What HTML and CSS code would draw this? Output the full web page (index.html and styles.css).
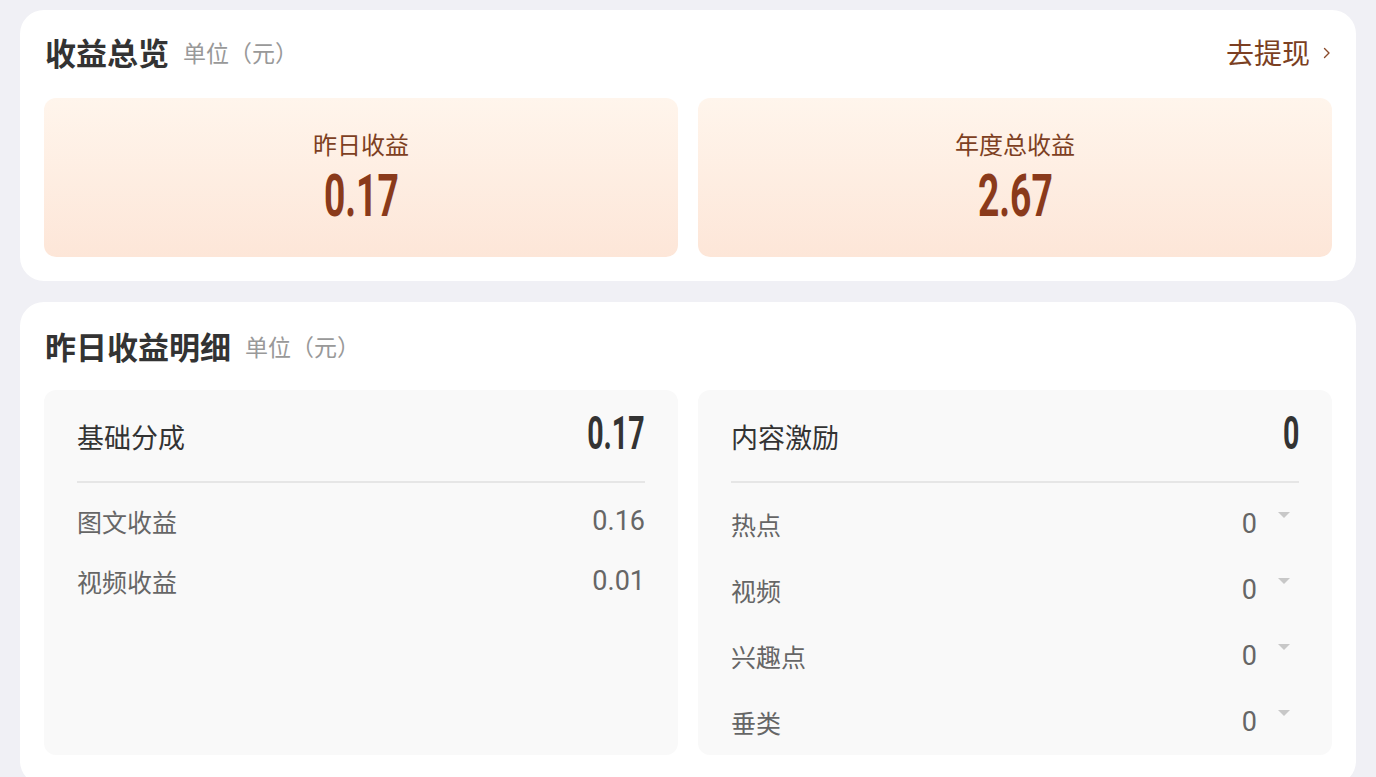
FILE: index.html
```html
<!DOCTYPE html>
<html lang="zh">
<head>
<meta charset="utf-8">
<title>收益</title>
<link rel="stylesheet" href="styles.css">
</head>
<body>
<div class="page">
  <section class="card overview">
    <div class="card-head">
      <div class="title-wrap"><h2 class="title">收益总览</h2><span class="unit">单位（元）</span></div>
      <a class="withdraw">去提现<svg class="chev" width="10" height="14" viewBox="0 0 10 14"><path d="M2.5 2.5 L7 7 L2.5 11.5" fill="none" stroke="#8a4a2a" stroke-width="1.4" stroke-linecap="round" stroke-linejoin="round"/></svg></a>
    </div>
    <div class="sum-grid">
      <div class="sum-box">
        <div class="sum-label">昨日收益</div>
        <div class="sum-value"><span class="cond">0.17</span></div>
      </div>
      <div class="sum-box">
        <div class="sum-label">年度总收益</div>
        <div class="sum-value"><span class="cond">2.67</span></div>
      </div>
    </div>
  </section>

  <section class="card detail">
    <div class="card-head">
      <div class="title-wrap"><h2 class="title">昨日收益明细</h2><span class="unit">单位（元）</span></div>
    </div>
    <div class="detail-grid">
      <div class="panel">
        <div class="panel-head">
          <span class="panel-name">基础分成</span>
          <span class="panel-total"><span class="cond-r">0.17</span></span>
        </div>
        <div class="rows rows-left">
          <div class="row"><span class="row-name">图文收益</span><span class="row-val">0.16</span></div>
          <div class="row"><span class="row-name">视频收益</span><span class="row-val">0.01</span></div>
        </div>
      </div>
      <div class="panel">
        <div class="panel-head">
          <span class="panel-name">内容激励</span>
          <span class="panel-total"><span class="cond-r">0</span></span>
        </div>
        <div class="rows rows-right">
          <div class="row tall"><span class="row-name">热点</span><span class="row-end"><span class="row-val">0</span><span class="tri"></span></span></div>
          <div class="row tall"><span class="row-name">视频</span><span class="row-end"><span class="row-val">0</span><span class="tri"></span></span></div>
          <div class="row tall"><span class="row-name">兴趣点</span><span class="row-end"><span class="row-val">0</span><span class="tri"></span></span></div>
          <div class="row tall"><span class="row-name">垂类</span><span class="row-end"><span class="row-val">0</span><span class="tri"></span></span></div>
        </div>
      </div>
    </div>
  </section>
</div>
</body>
</html>
```

FILE: styles.css
```css
* { box-sizing: border-box; }
html, body { margin: 0; padding: 0; }
body {
  background: #f0f0f5;
  font-family: "Noto Sans CJK SC", "Noto Sans", sans-serif;
  color: #333;
  width: 1376px;
  height: 777px;
  overflow: hidden;
}
.page {
  padding: 10px 20px 0 20px;
  display: flex;
  flex-direction: column;
  gap: 21px;
}
.card {
  background: #fff;
  border-radius: 24px;
  padding: 24px 24px 24px 24px;
}
.card-head {
  height: 40px;
  display: flex;
  align-items: center;
  justify-content: space-between;
  margin-bottom: 24px;
}
.overview .card-head { margin-top: -2px; margin-bottom: 26px; }
.title-wrap { display: flex; align-items: center; padding-left: 1px; }
.title {
  margin: 0;
  font-size: 31px;
  font-weight: 700;
  color: #333;
  line-height: 40px;
}
.unit {
  font-size: 23px;
  color: #999;
  margin-left: 14px;
  line-height: 40px;
}
.withdraw {
  display: flex;
  align-items: center;
  font-size: 28px;
  color: #7b3f22;
  line-height: 40px;
  margin-right: 0;
}
.chev { margin-left: 12px; margin-top: 2px; }

.sum-grid {
  display: grid;
  grid-template-columns: 1fr 1fr;
  gap: 20px;
}
.sum-box {
  height: 159px;
  border-radius: 12px;
  background: linear-gradient(180deg, #fff5ec 0%, #fde6d8 100%);
  display: flex;
  flex-direction: column;
  align-items: center;
  padding-top: 30px;
}
.sum-label {
  font-size: 24px;
  color: #7d3f22;
  line-height: 32px;
}
.sum-value {
  height: 60px;
  line-height: 60px;
  margin-top: 6px;
  color: #8a3a1b;
}
.cond, .cond-r {
  display: inline-block;
  font-family: "Roboto", "Liberation Sans", sans-serif;
  font-weight: 700;
  transform: scaleX(0.62);
}
.cond { font-size: 60px; transform-origin: 50% 50%; }

.detail { padding-bottom: 30px; }
.detail-grid {
  display: grid;
  grid-template-columns: 1fr 1fr;
  gap: 20px;
}
.panel {
  background: #f9f9f9;
  border-radius: 12px;
  height: 365px;
  padding: 24px 33px 0 33px;
}
.panel-head {
  height: 44px;
  display: flex;
  align-items: center;
  justify-content: space-between;
  margin-bottom: 23px;
}
.panel-name {
  font-size: 27px;
  color: #333;
}
.panel-total {
  color: #333;
  line-height: 44px;
  margin-top: 2px;
}
.cond-r { font-size: 46px; transform-origin: 100% 50%; }
.rows {
  border-top: 2px solid #e6e6e6;
}
.rows-left { padding-top: 8px; }
.rows-right { padding-top: 8px; }
.row {
  height: 60px;
  display: flex;
  align-items: center;
  justify-content: space-between;
}
.row.tall { height: 66px; }
.row-name {
  font-size: 25px;
  color: #666;
}
.row-val {
  font-family: "Roboto", "Liberation Sans", sans-serif;
  font-size: 27px;
  color: #666;
}
.row-end {
  display: flex;
  align-items: center;
}
.tri {
  width: 0;
  height: 0;
  border-left: 6px solid transparent;
  border-right: 6px solid transparent;
  border-top: 6px solid #c8c8c8;
  margin-left: 21px;
  margin-right: 9px;
  align-self: flex-start;
  margin-top: 4px;
}
```
